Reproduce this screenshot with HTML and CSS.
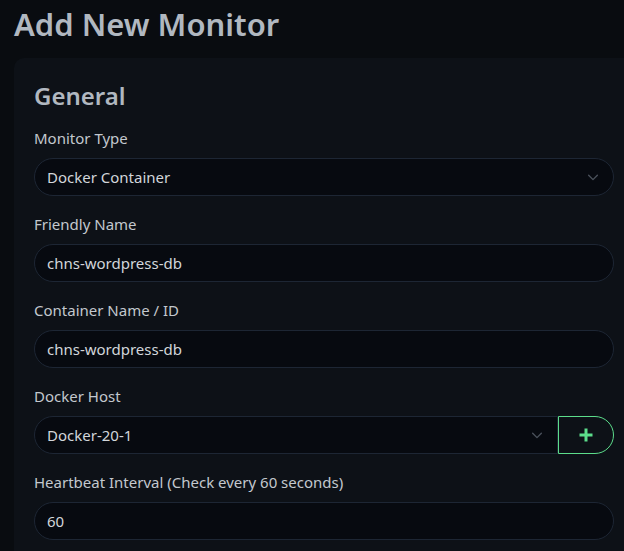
FILE: index.html
```html
<!DOCTYPE html>
<html lang="en">
<head>
  <meta charset="UTF-8" />
  <meta name="viewport" content="width=device-width, initial-scale=1.0" />
  <title>Add New Monitor</title>
  <link rel="stylesheet" href="styles.css">
</head>
<body>
  <div class="page">
    <h1 class="page-title">Add New Monitor</h1>

    <div class="card">
      <h2 class="card-title">General</h2>

      <div class="field">
        <label class="form-label" for="type">Monitor Type</label>
        <div class="select-wrap">
          <div class="form-control" id="type">Docker Container</div>
          <svg class="chevron" viewBox="0 0 16 16" width="14" height="14"><path d="M3 6l5 5 5-5" fill="none" stroke="currentColor" stroke-width="1.6" stroke-linecap="round" stroke-linejoin="round"/></svg>
        </div>
      </div>

      <div class="field">
        <label class="form-label" for="name">Friendly Name</label>
        <div class="form-control" id="name">chns-wordpress-db</div>
      </div>

      <div class="field">
        <label class="form-label" for="container">Container Name / ID</label>
        <div class="form-control" id="container">chns-wordpress-db</div>
      </div>

      <div class="field">
        <label class="form-label" for="host">Docker Host</label>
        <div class="input-group">
          <div class="select-wrap grow">
            <div class="form-control group-left" id="host">Docker-20-1</div>
            <svg class="chevron" viewBox="0 0 16 16" width="14" height="14"><path d="M3 6l5 5 5-5" fill="none" stroke="currentColor" stroke-width="1.6" stroke-linecap="round" stroke-linejoin="round"/></svg>
          </div>
          <button class="btn-add" type="button">
            <svg viewBox="0 0 16 16" width="16" height="16"><path d="M8 1.5v13M1.5 8h13" fill="none" stroke="currentColor" stroke-width="3"/></svg>
          </button>
        </div>
      </div>

      <div class="field">
        <label class="form-label" for="interval">Heartbeat Interval (Check every 60 seconds)</label>
        <div class="form-control" id="interval">60</div>
      </div>
    </div>
  </div>
</body>
</html>
```

FILE: styles.css
```css
html, body {
  margin: 0;
  background-color: #090c10;
  overflow: hidden;
}
body {
  font-family: "Noto Sans", "Open Sans", sans-serif;
  color: #b1b8c0;
}
.page {
  padding: 0 0 0 14px;
  width: 640px;
}
.page-title {
  margin: 0;
  font-size: 31px;
  font-weight: 600;
  line-height: 48px;
  color: #b1b8c0;
}
.card {
  margin-top: 10px;
  width: 580px;
  background-color: #0d1117;
  border-radius: 10px;
  padding: 20px;
}
.card-title {
  margin: 0 0 12px 0;
  font-size: 24px;
  font-weight: 600;
  line-height: 36px;
}
.field {
  margin-bottom: 16px;
}
.form-label {
  display: block;
  font-size: 15px;
  line-height: 24px;
  margin-bottom: 8px;
  color: #c3c8ce;
}
.form-control {
  box-sizing: border-box;
  height: 38px;
  padding: 0 12px;
  border: 1px solid #1d2634;
  border-radius: 19px;
  background-color: #070a10;
  color: #d2d6db;
  font-size: 15px;
  line-height: 36px;
}
.select-wrap {
  position: relative;
}
.chevron {
  position: absolute;
  right: 14px;
  top: 12px;
  color: #4a515b;
}
.input-group {
  display: flex;
}
.grow {
  flex: 1;
}
.group-left {
  border-radius: 19px 0 0 19px;
}
.btn-add {
  width: 56px;
  height: 38px;
  border: 1px solid #5cdd8b;
  border-radius: 0 19px 19px 0;
  background: transparent;
  color: #5cdd8b;
  display: flex;
  align-items: center;
  justify-content: center;
  padding: 0;
}
```
